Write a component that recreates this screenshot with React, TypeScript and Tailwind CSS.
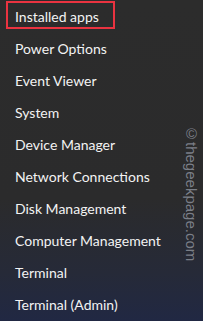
import React from 'react'

const items = [
  'Installed apps',
  'Power Options',
  'Event Viewer',
  'System',
  'Device Manager',
  'Network Connections',
  'Disk Management',
  'Computer Management',
  'Terminal',
  'Terminal (Admin)',
]

export default function App() {
  return (
    <div
      className="relative w-[203px] h-[321px] overflow-hidden bg-[linear-gradient(to_bottom,#2c2c2c_0%,#2b2b2c_62%,#262a38_85%,#212843_100%)] text-[#f3f3f3]"
      style={{ fontFamily: 'Lato, "Noto Sans", sans-serif' }}
    >
      <ul className="flex flex-col pt-[1px]">
        {items.map((item, i) => (
          <li key={item} className="h-[32px] flex items-center pl-[15px]">
            <span
              className={
                i === 0
                  ? 'relative text-[14px] leading-none'
                  : 'text-[14px] leading-none'
              }
            >
              {item}
              {i === 0 && (
                <span className="absolute -left-[9px] -top-[9px] w-[109px] h-[28px] border-2 border-[#ea3340]" />
              )}
            </span>
          </li>
        ))}
      </ul>
      <div
        className="absolute left-[184px] top-[125px] text-[15px] leading-none text-[#7b7f88]"
        style={{ writingMode: 'vertical-rl', fontFamily: '"Liberation Sans", Arial, sans-serif' }}
      >
        ©thegeekpage.com
      </div>
    </div>
  )
}
